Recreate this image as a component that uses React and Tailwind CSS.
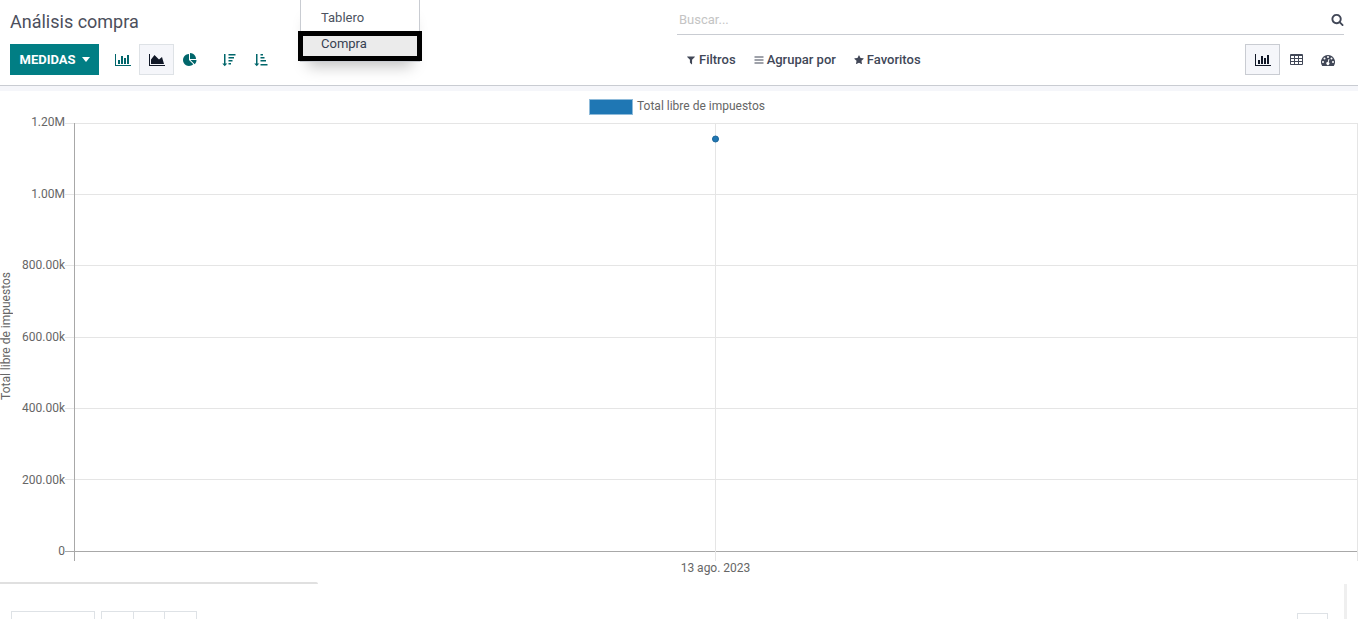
import React from 'react'
import clsx from 'clsx'

const ICONS = {
  bar: {
    box: '0 0 2048 1792',
    d: 'M640 896v512h-256v-512h256zm384-512v1024h-256v-1024h256zm1024 1152v128h-2048v-1536h128v1408h1920zm-640-896v768h-256v-768h256zm384-384v1152h-256v-1152h256z'
  },
  area: {
    box: '0 0 2048 1792',
    d: 'M2048 1536v128h-2048v-1536h128v1408h1920zm-384-1024l256 896h-1664v-576l448-576 576 576z'
  },
  pie: {
    box: '0 0 1792 1792',
    d: 'M768 890l546 546q-106 108-247.5 168t-298.5 60q-209 0-385.5-103t-279.5-279.5-103-385.5 103-385.5 279.5-279.5 385.5-103v762zm187 6h773q0 157-60 298.5t-168 247.5zm709-128h-768v-768q209 0 385.5 103t279.5 279.5 103 385.5z'
  },
  sortDesc: {
    box: '0 0 1792 1792',
    d: 'M256 128h192v1216h224L352 1696 32 1344h224zM832 128h896v192h-896zM832 512h704v192h-704zM832 896h512v192h-512zM832 1280h320v192h-320z'
  },
  sortAsc: {
    box: '0 0 1792 1792',
    d: 'M256 128h192v1216h224L352 1696 32 1344h224zM832 128h320v192h-320zM832 512h512v192h-512zM832 896h704v192h-704zM832 1408h896v192h-896z'
  },
  table: {
    box: '0 0 1664 1792',
    d: 'M128 128h1408q128 0 128 128v1152q0 128-128 128h-1408q-128 0-128-128v-1152q0-128 128-128zM128 384v256h384v-256zM640 384v256h384v-256zM1152 384v256h384v-256zM128 768v256h384v-256zM640 768v256h384v-256zM1152 768v256h384v-256zM128 1152v256h384v-256zM640 1152v256h384v-256zM1152 1152v256h384v-256z'
  },
  gauge: {
    box: '0 0 1792 1792',
    d: 'M896 256a896 896 0 0 1 757 1376q-19 32-55 32h-1404q-36 0-55-32A896 896 0 0 1 896 256zM256 1024a128 128 0 1 0 0 256a128 128 0 1 0 0-256zM448 576a128 128 0 1 0 0 256a128 128 0 1 0 0-256zM896 384a128 128 0 1 0 0 256a128 128 0 1 0 0-256zM1344 576a128 128 0 1 0 0 256a128 128 0 1 0 0-256zM1536 1024a128 128 0 1 0 0 256a128 128 0 1 0 0-256zM960 770l-100 386a192 192 0 1 0 124 32l101-382z'
  },
  search: {
    box: '0 0 1792 1792',
    d: 'M1216 832q0-185-131.5-316.5t-316.5-131.5-316.5 131.5-131.5 316.5 131.5 316.5 316.5 131.5 316.5-131.5 131.5-316.5zm512 832q0 52-38 90t-90 38q-54 0-90-38l-343-342q-179 124-399 124-143 0-273.5-55.5t-225-150-150-225-55.5-273.5 55.5-273.5 150-225 225-150 273.5-55.5 273.5 55.5 225 150 150 225 55.5 273.5q0 220-124 399l343 343q37 37 37 90z'
  },
  filter: {
    box: '0 0 1792 1792',
    d: 'M1595 295q17 41-14 70l-493 493v742q0 42-39 59-13 5-25 5-27 0-45-19l-256-256q-19-19-19-45v-486l-493-493q-31-29-14-70 17-39 59-39h1280q42 0 59 39z'
  },
  lines: {
    box: '0 0 1792 1792',
    d: 'M90 270h1612v180h-1612zM90 806h1612v180h-1612zM90 1344h1612v180h-1612z'
  },
  star: {
    box: '0 0 1792 1792',
    d: 'M1728 647q0 22-26 48l-363 354 86 500q1 7 1 20 0 21-10.5 35.5t-30.5 14.5q-19 0-40-12l-449-236-449 236q-22 12-40 12-21 0-31.5-14.5t-10.5-35.5q0-6 2-20l86-500-364-354q-25-27-25-48 0-37 56-46l502-73 225-455q19-41 49-41t49 41l225 455 502 73q56 9 56 46z'
  }
}

const Icon = ({ name, className }) => (
  <svg viewBox={ICONS[name].box} className={className} fill="currentColor" aria-hidden="true">
    <path d={ICONS[name].d} fillRule="evenodd" />
  </svg>
)

function IconButton({ icon, label, active, className }) {
  return (
    <button
      aria-label={label}
      aria-pressed={!!active}
      className={clsx(
        'flex h-[31px] items-center justify-center',
        active ? 'w-[35px] border bg-[#f5f6fa]' : 'w-8',
        className
      )}
    >
      <Icon name={icon} className="h-3.5" />
    </button>
  )
}

function ReportMenu() {
  return (
    <nav className="absolute left-[300px] top-0 w-[120px] border border-t-0 border-[#c9ccd2] bg-white pt-[5px] pb-1 text-[13px] shadow-[0_12px_14px_-8px_rgba(0,0,0,0.25)]">
      <a href="#tablero" className="block h-[26px] pl-5 leading-[26px] text-[#4c5360]">Tablero</a>
      <a href="#compra" className="relative block h-[26px] bg-[#ebebeb] pl-5 leading-[26px] text-[#374151]">
        Compra
        <span className="absolute -inset-x-[3px] top-0 h-[30px] border-[5px] border-black" />
      </a>
    </nav>
  )
}

const FILTERS = [
  { icon: 'filter', label: 'Filtros' },
  { icon: 'lines', label: 'Agrupar por' },
  { icon: 'star', label: 'Favoritos' }
]

function ControlPanel() {
  return (
    <header className="grid grid-cols-2 border-b border-[#c9ccd2] pb-2.5 text-[#414757]">
      <div className="pl-2.5">
        <h1 className="flex h-11 items-center text-lg text-[#4c4f5c]">Análisis compra</h1>
        <div className="flex items-center">
          <button className="flex h-[31px] w-[89px] items-center justify-center gap-1.5 bg-[#017e84] text-[13px] font-bold text-white">
            MEDIDAS
            <svg viewBox="0 0 8 5" className="h-[5px] w-2" fill="currentColor" aria-hidden="true">
              <path d="M0 0h8L4 5z" />
            </svg>
          </button>
          <IconButton icon="bar" label="Gráfico de barras" className="ml-2 text-[#01666b]" />
          <IconButton icon="area" label="Gráfico de líneas" active className="border-[#dee2e6] text-[#111827]" />
          <IconButton icon="pie" label="Gráfico circular" className="text-[#01666b]" />
          <IconButton icon="sortDesc" label="Descendente" className="ml-[7px] text-[#01666b]" />
          <IconButton icon="sortAsc" label="Ascendente" className="text-[#01666b]" />
        </div>
      </div>

      <div className="pr-3.5">
        <div className="-ml-0.5 flex h-[35px] items-center border-b border-[#c9ccd2] pt-[5px]">
          <input
            aria-label="Buscar"
            placeholder="Buscar..."
            className="min-w-0 flex-1 px-0.5 text-[13px] outline-none placeholder:text-[#c4c4c4]"
          />
          <button aria-label="Buscar">
            <Icon name="search" className="h-[13px]" />
          </button>
        </div>
        <div className="mt-[9px] flex items-center justify-between">
          <div className="-ml-0.5 flex">
            {FILTERS.map((f) => (
              <button key={f.label} className="flex items-center gap-[3px] px-[9px] text-[13px] font-medium">
                <Icon name={f.icon} className="h-2.5" />
                {f.label}
              </button>
            ))}
          </div>
          <div className="flex">
            <IconButton icon="bar" label="Gráfico" active className="border-[#c9ccd2] text-[#111827]" />
            <IconButton icon="table" label="Tabla dinámica" />
            <IconButton icon="gauge" label="Tablero" />
          </div>
        </div>
      </div>
    </header>
  )
}

const TICKS = ['1.20M', '1.00M', '800.00k', '600.00k', '400.00k', '200.00k', '0']
const PLOT_HEIGHT = 428

function Chart() {
  return (
    <section className="text-xs text-[#666]">
      <div className="flex h-[31px] items-start justify-center gap-1 pt-2 pr-1 leading-[14px]">
        <span className="h-4 w-11 border border-[#8fbbda] bg-[#1f77b4]" />
        Total libre de impuestos
      </div>
      <div className="flex">
        <div className="flex h-[428px] w-3 items-center justify-center leading-3">
          <span className="rotate-180 whitespace-nowrap [writing-mode:vertical-rl]">Total libre de impuestos</span>
        </div>
        {/* Labels are centred on their grid lines */}
        <div className="-mt-2 flex h-[445px] w-[53px] flex-col justify-between text-right leading-4">
          {TICKS.map((t) => (
            <span key={t}>{t}</span>
          ))}
        </div>
        <div className="min-w-0 flex-1 pl-[9px] pr-px">
          <svg className="block h-[439px] w-full overflow-visible" shapeRendering="crispEdges">
            {TICKS.map((t, i) => {
              const y = Math.floor((PLOT_HEIGHT * i) / (TICKS.length - 1)) + 1
              return (
                <line key={t} x1="-9" x2="100%" y1={y} y2={y} stroke={t === '0' ? '#a8a8a8' : '#e5e5e5'} />
              )
            })}
            <line x1="50%" x2="50%" y1="1" y2="439" stroke="#e5e5e5" />
            <line x1="100%" x2="100%" y1="1" y2="439" stroke="#e5e5e5" />
            <line x1="0" x2="0" y1="1" y2="439" stroke="#a8a8a8" />
            <circle cx="50%" cy="17" r="3" fill="#1f77b4" stroke="#1a6599" shapeRendering="auto" />
          </svg>
          <div className="flex h-[21px] items-start justify-center leading-[14px]">13 ago. 2023</div>
        </div>
      </div>
    </section>
  )
}

function NextPanel() {
  return (
    <footer>
      <div className="h-0.5 w-[318px] rounded-tr-sm bg-[#e0e0e0]" />
      <div className="flex h-[35px] items-end px-[11px]">
        <div className="h-2 w-[84px] border border-b-0 border-[#dee2e6]" />
        <div className="ml-1.5 flex h-2 w-24 divide-x divide-[#dee2e6] border border-b-0 border-[#dee2e6]">
          <span className="flex-1" />
          <span className="flex-1" />
          <span className="flex-1" />
        </div>
        <div className="ml-auto h-1.5 w-[31px] border border-b-0 border-[#dee2e6]" />
        <div className="ml-4 h-full w-[3px] bg-[#efefef]" />
      </div>
    </footer>
  )
}

export default function App() {
  return (
    <div className="relative overflow-hidden bg-white font-['Roboto',sans-serif]">
      <ControlPanel />
      <div className="h-[5px] bg-[#f5f6fa]" />
      <Chart />
      <NextPanel />
      <ReportMenu />
    </div>
  )
}
